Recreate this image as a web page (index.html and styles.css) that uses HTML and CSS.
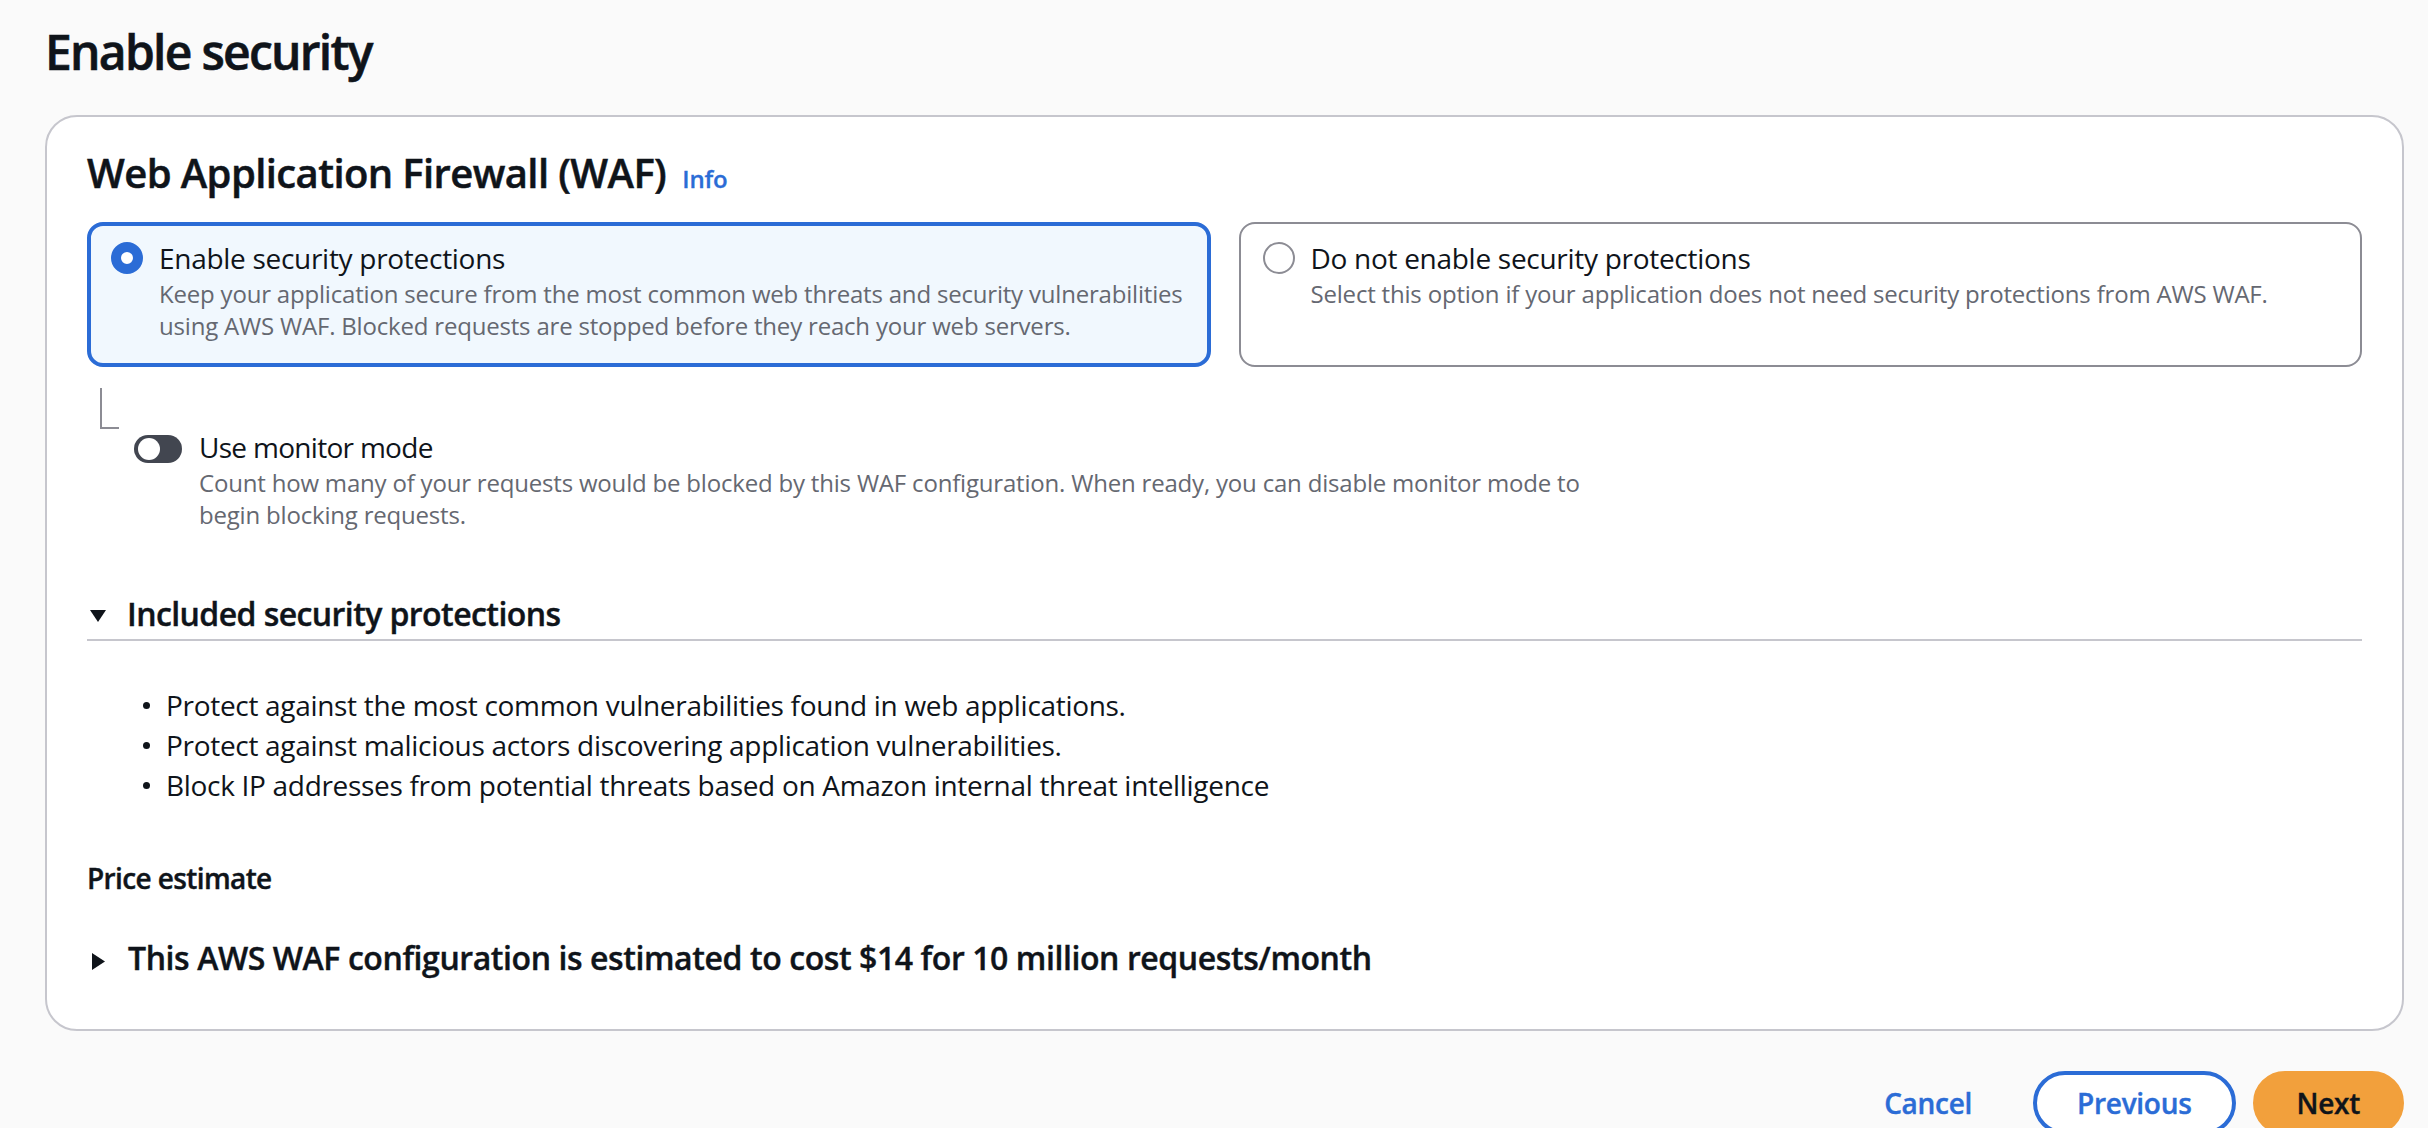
FILE: index.html
```html
<!DOCTYPE html>
<html lang="en">
<head>
<meta charset="utf-8">
<title>Enable security</title>
<link rel="stylesheet" href="styles.css">
</head>
<body>
<main class="page">
  <h1 class="page-title">Enable security</h1>
  <section class="card">
    <header class="card-header">
      <h2 class="card-title">Web Application Firewall (WAF)</h2>
      <a class="info-link" href="#">Info</a>
    </header>
    <div class="tiles">
      <div class="tile tile-selected">
        <span class="radio radio-checked"></span>
        <div class="tile-text">
          <div class="tile-label">Enable security protections</div>
          <div class="tile-desc">Keep your application secure from the most common web threats and security vulnerabilities using AWS WAF. Blocked requests are stopped before they reach your web servers.</div>
        </div>
      </div>
      <div class="tile">
        <span class="radio"></span>
        <div class="tile-text">
          <div class="tile-label">Do not enable security protections</div>
          <div class="tile-desc">Select this option if your application does not need security protections from AWS WAF.</div>
        </div>
      </div>
    </div>
    <div class="monitor">
      <div class="connector"></div>
      <div class="toggle-field">
        <span class="toggle"><span class="toggle-handle"></span></span>
        <div class="toggle-text">
          <div class="toggle-label">Use monitor mode</div>
          <div class="toggle-desc">Count how many of your requests would be blocked by this WAF configuration. When ready, you can disable monitor mode to begin blocking requests.</div>
        </div>
      </div>
    </div>
    <div class="expander">
      <div class="expander-header">
        <svg class="caret-down" width="16" height="12" viewBox="0 0 16 12" aria-hidden="true"><path d="M0 0h16L8 12z" fill="#0f141a"/></svg>
        <span>Included security protections</span>
      </div>
      <ul class="bullets">
        <li>Protect against the most common vulnerabilities found in web applications.</li>
        <li>Protect against malicious actors discovering application vulnerabilities.</li>
        <li>Block IP addresses from potential threats based on Amazon internal threat intelligence</li>
      </ul>
    </div>
    <div class="price-label">Price estimate</div>
    <div class="price-header">
      <svg class="caret-right" width="13" height="17" viewBox="0 0 13 17" aria-hidden="true"><path d="M0 0l13 8.5L0 17z" fill="#0f141a"/></svg>
      <span>This AWS WAF configuration is estimated to cost $14 for 10 million requests/month</span>
    </div>
  </section>
  <div class="actions">
    <button class="btn btn-link" type="button">Cancel</button>
    <button class="btn btn-normal" type="button">Previous</button>
    <button class="btn btn-primary" type="button">Next</button>
  </div>
</main>
</body>
</html>
```

FILE: styles.css
```css
* { box-sizing: border-box; }

body {
  margin: 0;
  background: #fafafa;
  font-family: "Open Sans", "Noto Sans", sans-serif;
  letter-spacing: -0.018em;
  color: #0f141a;
}

.page {
  padding: 22px 24px 0 45px;
}

.page-title {
  margin: 0 0 33px;
  font-size: 48px;
  line-height: 60px;
  font-weight: 600;
  letter-spacing: -0.036em;
  -webkit-text-stroke: 0.6px currentColor;
}

.card {
  background: #ffffff;
  border: 2px solid #c6c6cd;
  border-radius: 32px;
  padding: 32px 40px 51px 40px;
}

.card-header {
  display: flex;
  align-items: baseline;
  gap: 16px;
  margin-bottom: 25px;
}

.card-title {
  margin: 0;
  font-size: 40px;
  line-height: 48px;
  font-weight: 600;
  letter-spacing: -0.015em;
  -webkit-text-stroke: 0.5px currentColor;
}

.info-link {
  font-size: 24px;
  line-height: 32px;
  font-weight: 600;
  letter-spacing: -0.005em;
  color: #2b6cd6;
  text-decoration: none;
  -webkit-text-stroke: 0.3px currentColor;
}

.tiles {
  display: grid;
  grid-template-columns: 1fr 1fr;
  gap: 28px;
}

.tile {
  display: flex;
  gap: 16px;
  border: 2px solid #8c8c94;
  border-radius: 16px;
  padding: 14px 22px 23px 22px;
  background: #ffffff;
}

.tile-selected {
  border: 4px solid #2b6cd6;
  padding: 12px 20px 21px 20px;
  background: #f1f8fe;
}

.radio {
  flex: none;
  width: 32px;
  height: 32px;
  margin-top: 4px;
  border-radius: 50%;
  border: 2px solid #8c8c94;
  background: #ffffff;
}

.radio-checked {
  border: 10px solid #2b6cd6;
}

.tile-label,
.toggle-label {
  font-size: 28px;
  line-height: 40px;
}

.toggle-label {
  letter-spacing: -0.025em;
}

.tile-desc,
.toggle-desc {
  font-size: 24px;
  line-height: 32px;
  letter-spacing: -0.008em;
  color: #656871;
}

.monitor {
  margin-top: 21px;
  padding-left: 13px;
}

.connector {
  width: 19px;
  height: 41px;
  border-left: 2px solid #8c8c94;
  border-bottom: 2px solid #8c8c94;
}

.toggle-field {
  display: flex;
  gap: 17px;
  margin-top: -2px;
  margin-left: 34px;
}

.toggle {
  flex: none;
  display: flex;
  align-items: center;
  width: 48px;
  height: 28px;
  margin-top: 8px;
  padding-left: 4px;
  border-radius: 14px;
  background: #424650;
}

.toggle-handle {
  width: 22px;
  height: 22px;
  border-radius: 50%;
  background: #ffffff;
}

.toggle-desc {
  max-width: 1400px;
}

.expander {
  margin-top: 63px;
}

.expander-header,
.price-header {
  display: flex;
  align-items: center;
  font-size: 32px;
  line-height: 40px;
  font-weight: 600;
  -webkit-text-stroke: 0.4px currentColor;
}

.expander-header {
  padding-bottom: 5px;
  border-bottom: 2px solid #c6c6cd;
  letter-spacing: -0.018em;
}

.price-header {
  margin-top: 40px;
  letter-spacing: -0.013em;
}

.caret-down {
  flex: none;
  margin: 4px 21px 0 3px;
}

.caret-right {
  flex: none;
  margin: 6px 23px 0 5px;
}

.bullets {
  list-style: none;
  margin: 44px 0 0;
  padding: 0;
}

.bullets li {
  display: flex;
  align-items: flex-start;
  font-size: 28px;
  line-height: 40px;
  letter-spacing: -0.011em;
}

.bullets li::before {
  content: "";
  flex: none;
  width: 7px;
  height: 7px;
  margin: 17px 16px 0 56px;
  border-radius: 50%;
  background: #0f141a;
}

.price-label {
  margin-top: 53px;
  font-size: 28px;
  line-height: 40px;
  font-weight: 600;
  letter-spacing: -0.022em;
  -webkit-text-stroke: 0.4px currentColor;
}

.actions {
  display: flex;
  justify-content: flex-end;
  gap: 17px;
  margin-top: 40px;
}

.btn {
  height: 64px;
  padding: 0 40px;
  border: 4px solid transparent;
  border-radius: 32px;
  background: transparent;
  font-family: inherit;
  letter-spacing: -0.01em;
  font-size: 28px;
  line-height: 56px;
  font-weight: 600;
  -webkit-text-stroke: 0.4px currentColor;
  cursor: pointer;
}

.btn-link {
  color: #2b6cd6;
}

.btn-normal {
  border-color: #2b6cd6;
  background: #ffffff;
  color: #2b6cd6;
}

.btn-primary {
  border-color: #f2a03c;
  background: #f2a03c;
  color: #0f141a;
}
```
